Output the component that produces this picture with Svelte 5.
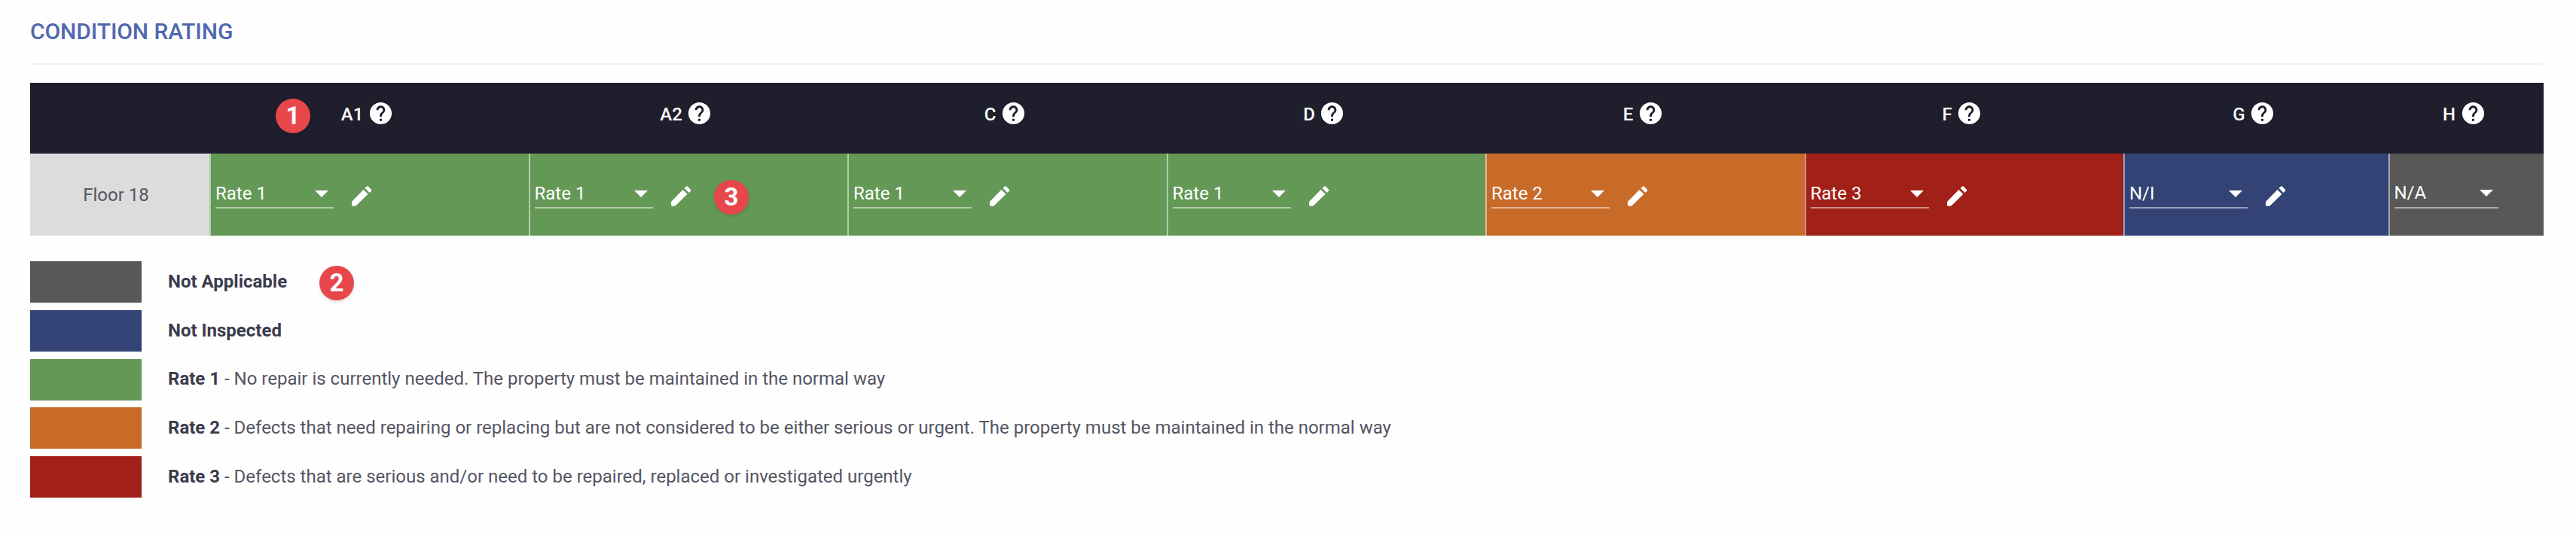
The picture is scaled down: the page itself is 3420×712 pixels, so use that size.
<script>
  const columns = [
    { name: 'A1', value: 'Rate 1', tone: 'green' },
    { name: 'A2', value: 'Rate 1', tone: 'green' },
    { name: 'C', value: 'Rate 1', tone: 'green' },
    { name: 'D', value: 'Rate 1', tone: 'green' },
    { name: 'E', value: 'Rate 2', tone: 'orange' },
    { name: 'F', value: 'Rate 3', tone: 'red' },
    { name: 'G', value: 'N/I', tone: 'blue' },
    { name: 'H', value: 'N/A', tone: 'gray', short: true }
  ];
  const legend = [
    { label: 'Not Applicable', text: '', tone: 'gray' },
    { label: 'Not Inspected', text: '', tone: 'blue' },
    { label: 'Rate 1', text: ' - No repair is currently needed. The property must be maintained in the normal way', tone: 'green' },
    { label: 'Rate 2', text: ' - Defects that need repairing or replacing but are not considered to be either serious or urgent. The property must be maintained in the normal way', tone: 'orange' },
    { label: 'Rate 3', text: ' - Defects that are serious and/or need to be repaired, replaced or investigated urgently', tone: 'red' }
  ];
</script>

<section class="panel">
  <h2>CONDITION RATING</h2>
  <div class="table">
    <div class="cell head"></div>
    {#each columns as col}
      <div class="cell head">
        <span>{col.name}</span>
        <svg class="icon" viewBox="0 0 24 24"><path d="M12 2C6.48 2 2 6.48 2 12s4.48 10 10 10 10-4.48 10-10S17.52 2 12 2zm1 17h-2v-2h2v2zm2.07-7.75l-.9.92C13.45 12.9 13 13.5 13 15h-2v-.5c0-1.1.45-2.1 1.17-2.83l1.24-1.26c.37-.36.59-.86.59-1.41 0-1.1-.9-2-2-2s-2 .9-2 2H8c0-2.21 1.79-4 4-4s4 1.79 4 4c0 .88-.36 1.68-.93 2.25z" /></svg>
      </div>
    {/each}
    <div class="cell floor">Floor 18</div>
    {#each columns as col}
      <div class="cell rate {col.tone}">
        <div class="select" class:short={col.short}>
          <span>{col.value}</span>
          <svg class="arrow" viewBox="0 0 10 5"><path d="M0 0l5 5 5-5z" /></svg>
        </div>
        {#if !col.short}
          <svg class="edit" viewBox="0 0 80 80">
            <path d="M46 15L64 32 18 77Q16 79 12 79H4Q0 79 0 75V66Q0 62 2 60z" />
            <path d="M52 9L58 3Q62-1 66 3L76 13Q80 17 76 21L70 27z" />
          </svg>
        {/if}
      </div>
    {/each}
  </div>
  <div class="legend">
    {#each legend as item}
      <div class="item">
        <i class="swatch {item.tone}"></i>
        <p><b>{item.label}</b>{item.text}</p>
      </div>
    {/each}
  </div>
  <span class="badge one">1</span>
  <span class="badge two">2</span>
  <span class="badge three">3</span>
</section>

<style>
  :global(body) { background: #fefefe; }
  .panel {
    position: relative;
    box-sizing: border-box;
    width: 3420px;
    height: 712px;
    padding: 0 43px 0 40px;
    overflow: hidden;
    font-family: Roboto, sans-serif;
    font-size: 24px;
    color: #555564;
  }
  h2 {
    box-sizing: border-box;
    height: 86px;
    margin: 0;
    padding-top: 24px;
    border-bottom: 2px solid #f3f3f3;
    font-size: 30px;
    line-height: 36px;
    font-weight: 500;
    letter-spacing: -.1px;
    color: #5067b0;
  }
  .table {
    display: grid;
    grid-template-columns: 238px 423.5px 423.5px 423.5px 423.5px 423.5px 423.5px 351.5px 206.5px;
    grid-template-rows: 94px 109px;
    margin-top: 24px;
  }
  .cell { display: flex; box-sizing: border-box; }
  .head {
    justify-content: center;
    gap: 5.5px;
    padding: 23px 4px 0 0;
    background: #1f1e2c;
    color: #fff;
    font-weight: 500;
    line-height: 38px;
  }
  .icon { width: 35px; height: 35px; fill: currentColor; flex: none; }
  .floor {
    align-items: center;
    justify-content: center;
    padding-right: 10px;
    background: #dcdcdc;
  }
  .rate {
    padding: 34px 0 0 6px;
    border-left: 2px solid rgba(255, 255, 255, .5);
    color: #fff;
  }
  .select {
    display: flex;
    justify-content: space-between;
    box-sizing: border-box;
    width: 157px;
    height: 39px;
    padding-right: 7px;
    border-bottom: 2px solid rgba(255, 255, 255, .5);
    line-height: 38px;
  }
  .short { width: 138px; line-height: 36px; }
  .arrow { width: 18px; height: 9px; margin-top: 15px; fill: currentColor; }
  .short .arrow { margin-top: 14px; }
  .edit { width: 27px; height: 27px; margin: 9px 0 0 24px; fill: currentColor; overflow: visible; }
  .gray { background-color: #585858; }
  .blue { background-color: #344376; }
  .green { background-color: #649856; }
  .orange { background-color: #c86a28; }
  .red { background-color: #a12017; }
  .legend { display: grid; gap: 9.8px; margin-top: 34px; }
  .item { display: flex; align-items: center; gap: 35px; height: 55px; }
  .swatch { width: 148px; height: 55px; }
  p { margin: 0; padding-bottom: 1.5px; white-space: pre; }
  b { font-weight: 700; color: #3b3b4d; }
  .badge {
    position: absolute;
    width: 46px;
    height: 46px;
    border-radius: 50%;
    background: #e7474a;
    color: #fff;
    font-size: 33px;
    font-weight: 700;
    line-height: 46px;
    text-align: center;
    box-shadow: 0 2px 4px rgba(0, 0, 0, .14);
  }
  .one { left: 366px; top: 131px; }
  .two { left: 424px; top: 353px; }
  .three { left: 948px; top: 239px; }
</style>
